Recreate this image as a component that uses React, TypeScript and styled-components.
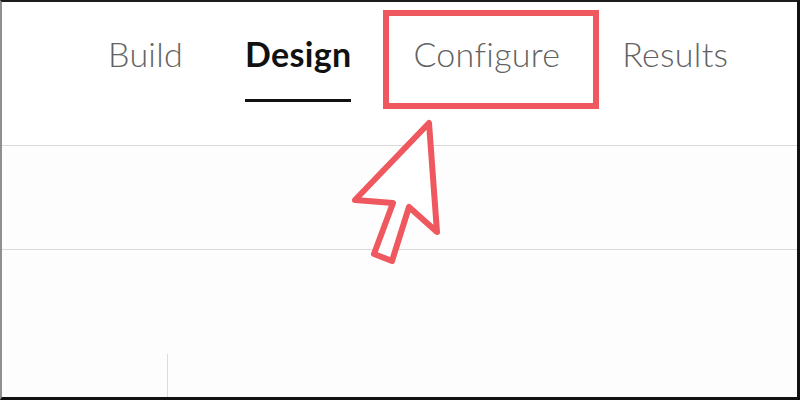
import styled, { createGlobalStyle } from 'styled-components';

const GlobalStyle = createGlobalStyle`
  html, body {
    margin: 0;
    padding: 0;
    background: #ffffff;
  }
  * {
    box-sizing: border-box;
  }
`;

const Frame = styled.div`
  position: relative;
  width: 800px;
  height: 400px;
  overflow: hidden;
  display: flex;
  flex-direction: column;
  background: #fdfdfd;
  border-top: 2px solid #1c1c1c;
  border-right: 3px solid #111;
  border-bottom: 3px solid #111;
  border-left: 2px solid #8f8f8f;
  font-family: Lato, "Open Sans", sans-serif;
`;

const TabBar = styled.nav`
  display: flex;
  gap: 62px;
  height: 144px;
  padding-left: 106px;
  border-bottom: 1px solid #d9d9d9;
  background: #fff;
`;

const Tab = styled.div`
  display: flex;
  flex-direction: column;
  align-items: stretch;
`;

const TabLabel = styled.span<{ $active?: boolean }>`
  margin-top: 32px;
  font-size: 34px;
  line-height: 40px;
  letter-spacing: 0.3px;
  font-weight: ${(p) => (p.$active ? 700 : 300)};
  color: ${(p) => (p.$active ? '#111' : '#626262')};
`;

const Underline = styled.div`
  margin-top: 25px;
  height: 3px;
  background: #111;
`;

const Toolbar = styled.div`
  height: 104px;
  border-bottom: 1px solid #d9d9d9;
`;

const Workspace = styled.div`
  flex: 1;
  display: flex;
  flex-direction: column;
  padding-top: 104px;
`;

const Panels = styled.div`
  flex: 1;
  display: flex;
`;

const Sidebar = styled.div`
  width: 166px;
  border-right: 1px solid #dcdcdc;
`;

const Highlight = styled.div`
  position: absolute;
  left: 381px;
  top: 8px;
  width: 216px;
  height: 99px;
  border: 6px solid #ee585e;
`;

const Pointer = styled.svg`
  position: absolute;
  left: 338px;
  top: 108px;
`;

const tabs = ['Build', 'Design', 'Configure', 'Results'];

export default function App() {
  return (
    <>
      <GlobalStyle />
      <Frame>
        <TabBar>
          {tabs.map((name) => (
            <Tab key={name}>
              <TabLabel $active={name === 'Design'}>{name}</TabLabel>
              {name === 'Design' && <Underline />}
            </Tab>
          ))}
        </TabBar>
        <Toolbar />
        <Workspace>
          <Panels>
            <Sidebar />
          </Panels>
        </Workspace>
        <Highlight />
        <Pointer width="110" height="160" viewBox="0 0 110 160">
          <polygon
            points="89,13 97,122 69,97 52,151 34,144 53,93 15,90"
            fill="#fff"
            stroke="#ee585e"
            strokeWidth="6"
            strokeLinejoin="round"
          />
        </Pointer>
      </Frame>
    </>
  );
}
